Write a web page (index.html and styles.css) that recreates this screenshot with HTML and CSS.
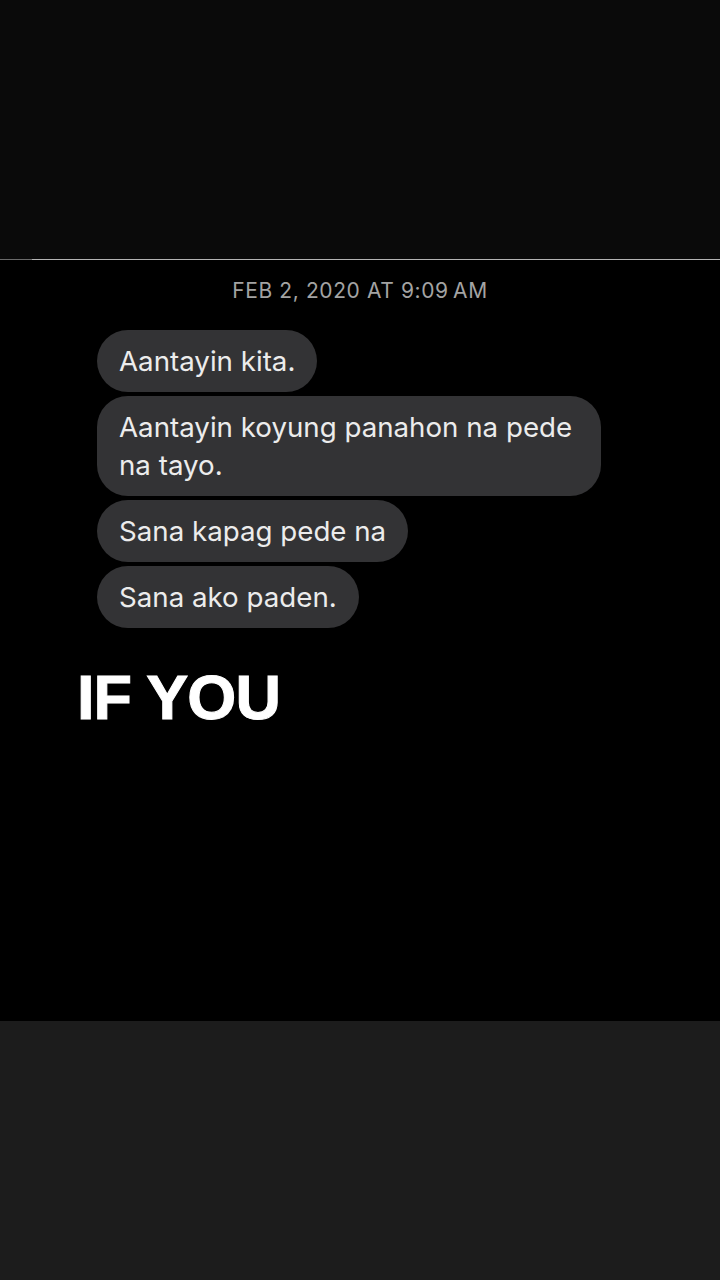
FILE: index.html
```html
<!DOCTYPE html>
<html lang="tl">
<head>
  <meta charset="UTF-8">
  <title>Messages</title>
  <link rel="stylesheet" href="styles.css">
</head>
<body>
  <div class="top-area"></div>
  <div class="divider"><span class="divider-left"></span><span class="divider-right"></span></div>

  <main class="chat">
    <div class="timestamp">FEB 2, 2020 AT 9:09&#8239;AM</div>

    <div class="messages">
      <div class="bubble">Aantayin kita.</div>
      <div class="bubble">Aantayin koyung panahon na pede na tayo.</div>
      <div class="bubble">Sana kapag pede na</div>
      <div class="bubble">Sana ako paden.</div>
    </div>

    <h1 class="caption">IF YOU</h1>
  </main>

  <div class="bottom-area"></div>
</body>
</html>
```

FILE: styles.css
```css
body {
  margin: 0;
  padding: 0;
  background: #000;
  font-family: 'Inter', 'Noto Sans', sans-serif;
  width: 720px;
  height: 1280px;
  display: flex;
  flex-direction: column;
  overflow: hidden;
}

.top-area {
  height: 259px;
  background: #0a0a0a;
}

.divider {
  display: flex;
  height: 1px;
}

.divider-left {
  width: 32px;
  background: #6a6a6a;
}

.divider-right {
  flex: 1;
  background: #b4b4b4;
}

.chat {
  height: 761px;
  background: #000;
  display: flex;
  flex-direction: column;
}

.timestamp {
  text-align: center;
  color: #a3a3a3;
  font-size: 21px;
  line-height: 26px;
  margin-top: 18px;
  letter-spacing: 0.6px;
}

.messages {
  display: flex;
  flex-direction: column;
  align-items: flex-start;
  gap: 4px;
  padding-left: 97px;
  margin-top: 26px;
  width: 504px;
}

.bubble {
  background: #333335;
  color: #ececec;
  font-size: 27.7px;
  line-height: 38px;
  padding: 12px 22px;
  border-radius: 31px;
}

.caption {
  margin: 34px 0 0 77px;
  color: #fff;
  font-family: 'Liberation Sans', Arial, sans-serif;
  font-weight: bold;
  font-size: 63px;
  letter-spacing: -1px;
  line-height: 70px;
  -webkit-text-stroke: 1px #fff;
}

.bottom-area {
  flex: 1;
  background: #1c1c1c;
}
```
